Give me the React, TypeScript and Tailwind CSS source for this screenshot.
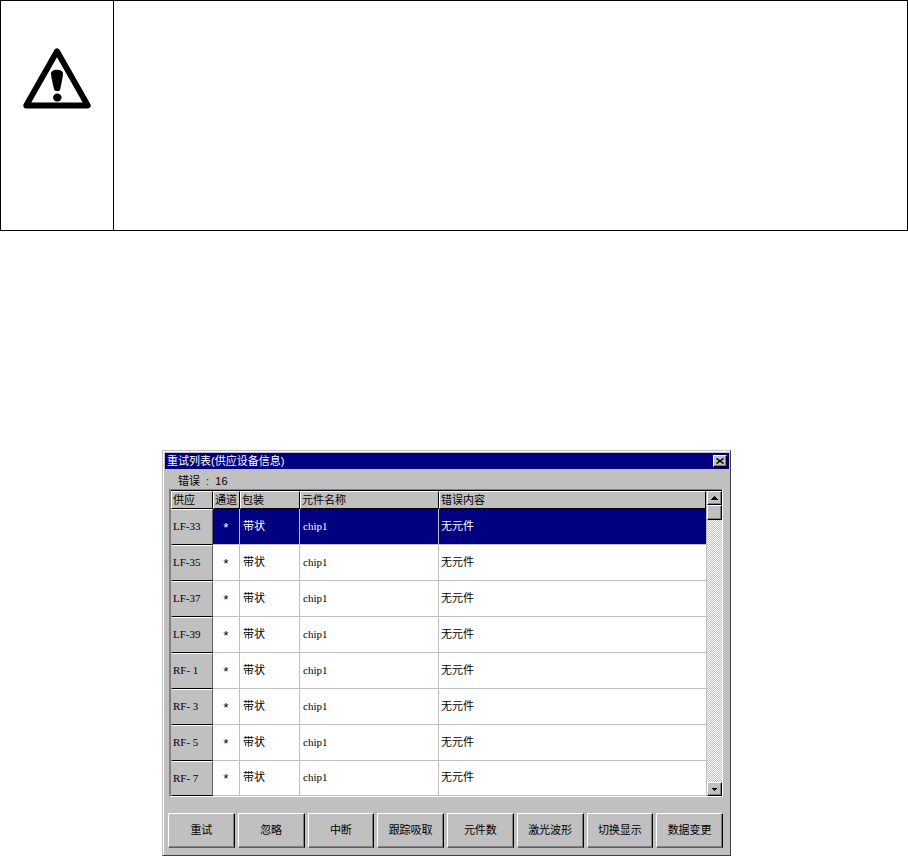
import clsx from "clsx";

const raised =
  "bg-[#c0c0c0] border border-t-white border-l-white border-r-black border-b-black shadow-[inset_-1px_-1px_0_#808080]";

const rows = ["LF-33", "LF-35", "LF-37", "LF-39", "RF- 1", "RF- 3", "RF- 5", "RF- 7"];

const headers = ["供应", "通道", "包装", "元件名称", "错误内容"];

const actions = ["重试", "忽略", "中断", "跟踪吸取", "元件数", "激光波形", "切换显示", "数据变更"];

function WarningIcon() {
  return (
    <svg viewBox="0 0 68 62" className="w-[68px] h-[62px]" role="img" aria-label="警告">
      <path d="M34 4.2 L64.8 58.5 H3.2 Z" fill="none" stroke="#000" strokeWidth="5.8" strokeLinejoin="round" />
      <path
        d="M28 26.5 C28 21.5 40 21.5 40 26.5 C40 30 38 38 37.4 42 C36.8 45 31.6 45 31 42 C30.2 38 28 30 28 26.5 Z"
        fill="#000"
      />
      <ellipse cx="34.3" cy="50.5" rx="4.3" ry="4" fill="#000" />
    </svg>
  );
}

function NoticeBox() {
  return (
    <div className="flex h-[231px] border border-black">
      <div className="flex w-[113px] shrink-0 justify-center border-r border-black pt-[46px]">
        <WarningIcon />
      </div>
      <div className="flex-1" />
    </div>
  );
}

function ScrollBar() {
  return (
    <div className="flex w-4 shrink-0 flex-col bg-[repeating-conic-gradient(#c0c0c0_0_25%,#ffffff_0_50%)] bg-[length:2px_2px] border-l border-[#c0c0c0]">
      <button type="button" aria-label="向上" className={clsx(raised, "flex h-3.5 items-center justify-center")}>
        <svg viewBox="0 0 7 4" className="w-[7px] h-1">
          <path d="M3 0h1v1h1v1h1v1h1v1H0V3h1V2h1V1h1z" />
        </svg>
      </button>
      <div className={clsx(raised, "h-[15px]")} />
      <div className="flex-1" />
      <button type="button" aria-label="向下" className={clsx(raised, "flex h-3.5 items-center justify-center")}>
        <svg viewBox="0 0 5 3" className="w-[5px] h-[3px]">
          <path d="M0 0h5v1H4v1H3v1H2V2H1V1H0z" />
        </svg>
      </button>
    </div>
  );
}

function ErrorTable() {
  return (
    <table className="min-w-0 flex-1 table-fixed border-separate border-spacing-0 bg-white text-left">
      <colgroup>
        <col className="w-[42px]" />
        <col className="w-[27px]" />
        <col className="w-[60px]" />
        <col className="w-[139px]" />
        <col />
      </colgroup>
      <thead>
        <tr className="h-[18px] bg-[#c0c0c0]">
          {headers.map((h) => (
            <th
              key={h}
              scope="col"
              className="whitespace-nowrap border border-t-white border-l-white border-r-black border-b-black p-0 pl-px font-normal leading-4"
            >
              {h}
            </th>
          ))}
        </tr>
      </thead>
      <tbody>
        {rows.map((name, i) => (
          <tr key={name} className={clsx("h-9 last:h-[35px]", i === 0 && "bg-[#000080] text-white")}>
            <th
              scope="row"
              className="whitespace-pre border border-t-white border-l-[#c0c0c0] border-r-[#606060] border-b-black bg-[#c0c0c0] p-0 pb-0.5 pl-px font-normal text-black"
            >
              {name}
            </th>
            <td className="border-r border-b border-[#c0c0c0] p-0 pt-1 text-center font-['Liberation_Mono',monospace] text-[13px]">
              *
            </td>
            <td className="border-r border-b border-[#c0c0c0] p-0 pb-0.5 pl-[3px]">带状</td>
            <td className="border-r border-b border-[#c0c0c0] p-0 pb-0.5 pl-[3px]">chip1</td>
            <td className="border-b border-[#c0c0c0] p-0 pb-0.5 pl-0.5">无元件</td>
          </tr>
        ))}
      </tbody>
    </table>
  );
}

function RetryDialog() {
  return (
    <section className="ml-[162px] mr-[177px] mt-[219px] border border-t-[#c0c0c0] border-l-[#c0c0c0] border-r-[#404040] border-b-[#404040] bg-[#c0c0c0] text-[11px] leading-4 text-black">
      <div className="border-t border-l border-white px-px pt-px pb-[7px]">
        <header className="flex h-4 items-center justify-between bg-[#000080] pl-0.5 pr-0.5 text-white">
          <h1>重试列表(供应设备信息)</h1>
          <button type="button" aria-label="关闭" className={clsx(raised, "flex h-3 w-3.5 items-center justify-center")}>
            <svg viewBox="0 0 8 6" className="w-2 h-1.5">
              <path d="M0.5 0.5L7.5 5.5M7.5 0.5L0.5 5.5" stroke="#000" strokeWidth="1.5" />
            </svg>
          </button>
        </header>
        <p className="h-5 whitespace-pre pl-[13px] pt-1">错误&nbsp; :&nbsp; 16</p>
        <div className="ml-1 mr-[6px] border-t border-l-2 border-r border-b border-t-[#808080] border-l-[#808080] border-r-white border-b-white">
          <div className="flex border-t border-black font-['Liberation_Serif','Noto_Sans_CJK_SC',serif]">
            <ErrorTable />
            <ScrollBar />
          </div>
        </div>
        <div className="mt-4 ml-[3px] mr-[6px] grid grid-cols-8 gap-[3px]">
          {actions.map((label) => (
            <button
              key={label}
              type="button"
              className="h-[35px] whitespace-nowrap border border-t-white border-l-white border-r-black border-b-[#606060] bg-[#c0c0c0] pb-0.5 shadow-[inset_-1px_-1px_0_#808080]"
            >
              {label}
            </button>
          ))}
        </div>
      </div>
    </section>
  );
}

export default function App() {
  return (
    <main className="bg-white font-['Liberation_Sans','Noto_Sans_CJK_SC',sans-serif]">
      <NoticeBox />
      <RetryDialog />
    </main>
  );
}
